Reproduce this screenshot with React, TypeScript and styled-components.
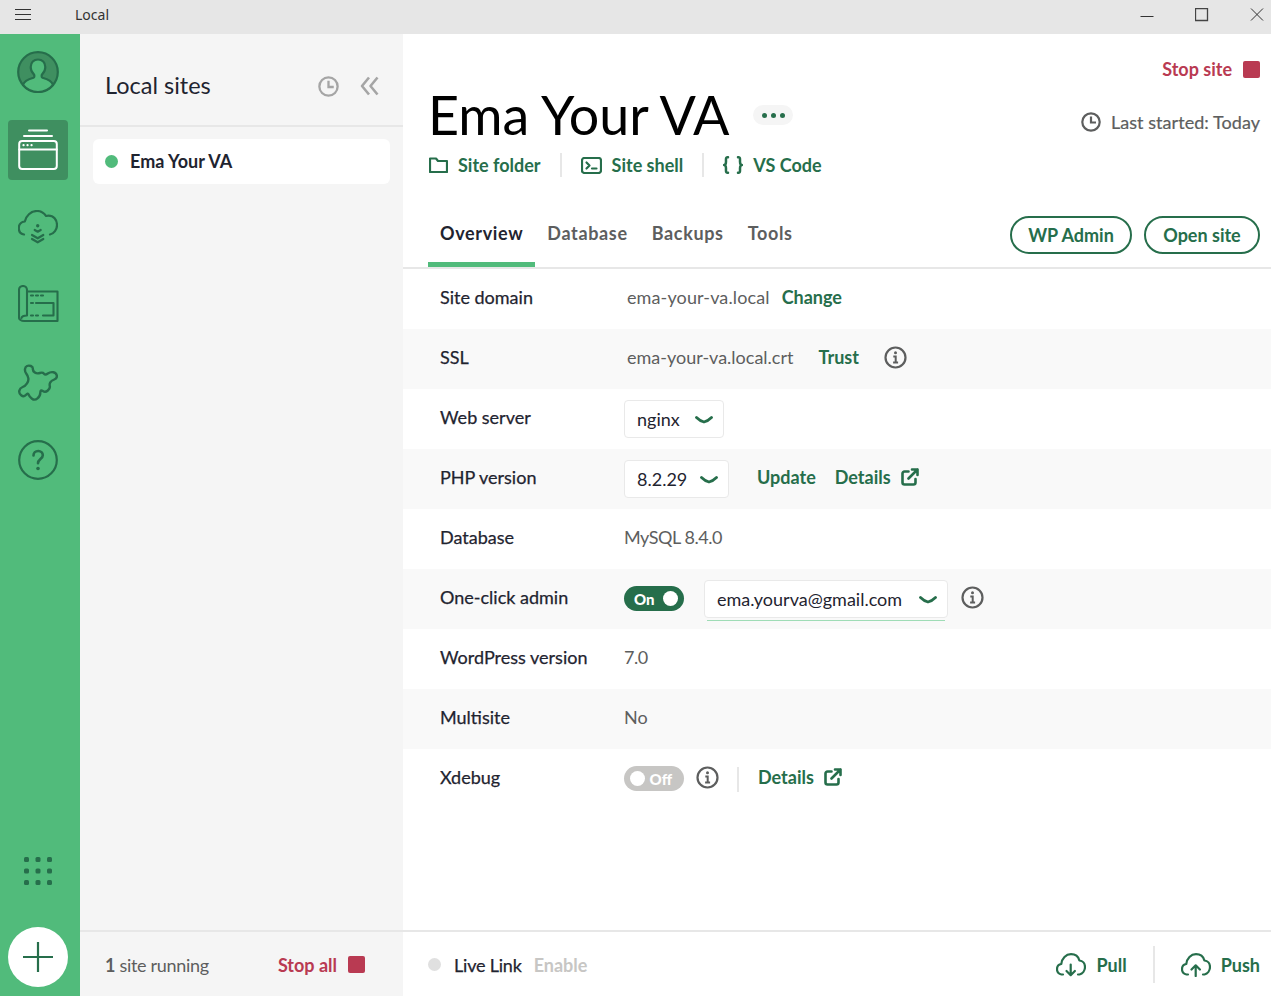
import React from 'react';
import styled, { createGlobalStyle } from 'styled-components';

const GREEN = '#51bb7b';
const DARK = '#266e4b';
const RED = '#b93a52';
const BORDER = '#e7e7e7';
const FONT = '"Lato", "Noto Sans", sans-serif';

const GlobalStyle = createGlobalStyle`
  html, body { margin: 0; height: 100%; overflow: hidden; }
  #root { height: 100%; }
  * { box-sizing: border-box; }
  body { font-family: ${FONT}; color: #262626; background: #fff; }
`;

const Shell = styled.div`
  height: 100vh;
  display: flex;
  flex-direction: column;
`;

const TitleBar = styled.div`
  height: 34px;
  flex: none;
  background: #e6e6e6;
  display: flex;
  align-items: center;
  padding: 0 0 4px 15px;
  color: #333;
`;

const TitleText = styled.span`
  margin: -1px 0 0 44px;
  font: 14px 'Noto Sans', sans-serif;
`;

const WindowButtons = styled.div`
  margin-left: auto;
  display: flex;
  align-items: center;
  gap: 27px;
`;

const WindowButton = styled.div`
  width: 28px;
  height: 28px;
  display: flex;
  align-items: center;
  justify-content: center;
`;

const Body = styled.div`
  flex: 1;
  min-height: 0;
  display: flex;
`;

const Nav = styled.nav`
  width: 80px;
  flex: none;
  background: ${GREEN};
  display: flex;
  flex-direction: column;
  align-items: center;
  padding: 8px 4px 9px 0;
  gap: 17.6px;
`;

const NavItem = styled.div<{ $active?: boolean }>`
  width: 60px;
  height: 60px;
  flex: none;
  border-radius: 4px;
  display: flex;
  align-items: center;
  justify-content: center;
  background: ${(p) => (p.$active ? '#3f8f60' : 'transparent')};
`;

const NavBottom = styled.div`
  margin-top: auto;
  display: flex;
  flex-direction: column;
  align-items: center;
  gap: 42px;
`;

const AddButton = styled.div`
  width: 60px;
  height: 60px;
  border-radius: 50%;
  background: #fff;
  display: flex;
  align-items: center;
  justify-content: center;
`;

const Sidebar = styled.aside`
  width: 323px;
  flex: none;
  background: #f5f5f5;
  display: flex;
  flex-direction: column;
`;

const SidebarHeader = styled.div`
  height: 93px;
  flex: none;
  border-bottom: 2px solid ${BORDER};
  display: flex;
  align-items: center;
  padding: 13px 24px 0 25px;
`;

const SidebarTitle = styled.h2`
  margin: -2px 0 0;
  font-size: 23.5px;
  font-weight: 400;
  color: #1f2430;
  flex: 1;
`;

const SidebarIcons = styled.div`
  display: flex;
  align-items: center;
  gap: 21px;
`;

const SiteList = styled.div`
  flex: 1;
  padding: 12px 13px;
`;

const SiteItem = styled.div`
  height: 45px;
  border-radius: 6px;
  background: #fff;
  display: flex;
  align-items: center;
  padding: 0 0 1px 12px;
  gap: 12px;
  font-size: 18px;
  font-weight: 700;
  color: #1f2430;
`;

const Dot = styled.span<{ $color: string; $size: number }>`
  width: ${(p) => p.$size}px;
  height: ${(p) => p.$size}px;
  border-radius: 50%;
  background: ${(p) => p.$color};
  flex: none;
`;

const FooterBar = styled.div`
  height: 66px;
  flex: none;
  border-top: 2px solid ${BORDER};
  display: flex;
  align-items: center;
`;

const SidebarFooter = styled(FooterBar)`
  padding: 1px 38px 0 25px;
  justify-content: space-between;
  color: #5d5e5e;
  font-size: 18px;
  letter-spacing: -0.3px;
`;

const Strong = styled.strong`
  font-weight: 700;
`;

const StopLink = styled.div`
  display: flex;
  align-items: center;
  gap: 11px;
  color: ${RED};
  font-weight: 700;
  font-size: 18px;
  letter-spacing: 0;
`;

const StopSquare = styled.span`
  width: 17px;
  height: 17px;
  border-radius: 2px;
  background: ${RED};
`;

const Main = styled.main`
  flex: 1;
  min-width: 0;
  display: flex;
  flex-direction: column;
`;

const Header = styled.header`
  height: 163px;
  flex: none;
  display: flex;
  justify-content: space-between;
  padding: 0 11px 0 26px;
`;

const HeaderLeft = styled.div`
  padding-top: 47px;
`;

const HeaderRight = styled.div`
  padding-top: 24px;
  display: flex;
  flex-direction: column;
  align-items: flex-end;
  gap: 31px;
`;

const TitleRow = styled.div`
  display: flex;
  align-items: center;
  gap: 24px;
  height: 68px;
`;

const SiteTitle = styled.h1`
  margin: -2px 0 0 -1px;
  font-size: 53.8px;
  font-weight: 400;
  color: #000;
  line-height: 68px;
`;

const MorePill = styled.div`
  width: 40px;
  height: 20px;
  border-radius: 10px;
  background: #f5f5f5;
  display: flex;
  align-items: center;
  justify-content: center;
  gap: 4px;
`;

const MoreDot = styled.span`
  width: 5px;
  height: 5px;
  border-radius: 50%;
  background: ${DARK};
`;

const LinksRow = styled.div`
  display: flex;
  align-items: center;
  height: 28px;
  margin-top: 2px;
`;

const ToolLink = styled.div`
  display: flex;
  align-items: center;
  gap: 10px;
  color: ${DARK};
  font-size: 18px;
  font-weight: 700;
`;

const VRule = styled.span<{ $gap: number; $h?: number }>`
  width: 2px;
  height: ${(p) => p.$h ?? 24}px;
  background: ${BORDER};
  margin: 0 ${(p) => p.$gap}px;
  flex: none;
`;

const LastStarted = styled.div`
  display: flex;
  align-items: center;
  gap: 10px;
  color: #5d5e5e;
  font-size: 18px;
  letter-spacing: 0.05px;
  -webkit-text-stroke: 0.2px #5d5e5e;
`;

const TabsBar = styled.div`
  height: 72px;
  flex: none;
  border-bottom: 2px solid ${BORDER};
  display: flex;
  justify-content: space-between;
  padding: 0 11px 0 25px;
`;

const Tabs = styled.div`
  display: flex;
  height: 70px;
`;

const Tab = styled.div<{ $active?: boolean }>`
  padding: 25px 12px 0 12px;
  font-size: 18px;
  font-weight: 700;
  letter-spacing: 0.65px;
  color: ${(p) => (p.$active ? '#1f2430' : '#5d5e5e')};
  border-bottom: 5px solid ${(p) => (p.$active ? GREEN : 'transparent')};
`;

const PillButtons = styled.div`
  display: flex;
  gap: 12px;
  padding-top: 19px;
`;

const PillButton = styled.div<{ $w: number }>`
  width: ${(p) => p.$w}px;
  height: 38px;
  padding-bottom: 1px;
  border: 2px solid ${DARK};
  border-radius: 19px;
  color: ${DARK};
  font-size: 18px;
  font-weight: 700;
  display: flex;
  align-items: center;
  justify-content: center;
`;

const Rows = styled.div`
  flex: 1;
`;

const Row = styled.div<{ $shade?: boolean }>`
  height: 60px;
  display: flex;
  align-items: center;
  padding-left: 37px;
  background: ${(p) => (p.$shade ? '#f9f9f9' : '#fff')};
`;

const Label = styled.div`
  width: 184px;
  flex: none;
  padding-bottom: 4px;
  font-size: 18px;
  color: #1f2430;
  -webkit-text-stroke: 0.25px #1f2430;
`;

const Value = styled.span<{ $indent?: number; $track?: number }>`
  margin-left: ${(p) => p.$indent ?? 0}px;
  padding-bottom: 4px;
  color: #5d5e5e;
  font-size: 18px;
  letter-spacing: ${(p) => p.$track ?? 0}px;
`;

const ActionLink = styled.span<{ $left: number }>`
  margin-left: ${(p) => p.$left}px;
  padding-bottom: 4px;
  color: ${DARK};
  font-size: 18px;
  font-weight: 700;
  display: inline-flex;
  align-items: center;
  gap: 10px;
`;

const SelectBox = styled.div<{ $w: number }>`
  position: relative;
  width: ${(p) => p.$w}px;
  height: 38px;
  flex: none;
  background: #fff;
  border: 1px solid #e9e9e9;
  border-radius: 4px;
  padding: 0 10px 0 12px;
  display: flex;
  align-items: center;
  justify-content: space-between;
  font-size: 18px;
  color: #1f2430;
`;

const SelectUnderline = styled.span`
  position: absolute;
  left: 2px;
  right: 2px;
  bottom: -4px;
  height: 1px;
  background: #9fdcb6;
`;

const Toggle = styled.div<{ $on?: boolean }>`
  width: 60px;
  height: 25px;
  margin-bottom: 1px;
  border-radius: 13px;
  flex: none;
  background: ${(p) => (p.$on ? DARK : '#c7c6c4')};
  color: #fff;
  font-size: 15px;
  font-weight: 900;
  display: flex;
  flex-direction: ${(p) => (p.$on ? 'row' : 'row-reverse')};
  justify-content: space-between;
  align-items: center;
  padding: 0 ${(p) => (p.$on ? 6 : 12)}px 0 ${(p) => (p.$on ? 10 : 0)}px;
`;

const ToggleKnob = styled.span<{ $on?: boolean }>`
  width: 15px;
  height: 15px;
  border-radius: 50%;
  background: #fff;
  margin-left: ${(p) => (p.$on ? 0 : 6)}px;
`;

const Slot = styled.span<{ $left: number }>`
  margin-left: ${(p) => p.$left}px;
  display: inline-flex;
`;

const MainFooter = styled(FooterBar)`
  padding: 1px 11px 0 25px;
  font-size: 18px;
`;

const LiveLabel = styled.span`
  margin-left: 13px;
  color: #1f2430;
  letter-spacing: -0.2px;
  -webkit-text-stroke: 0.25px #1f2430;
`;

const EnableLink = styled.span`
  margin-left: 12px;
  font-weight: 700;
  color: #c7c6c4;
`;

const FooterActions = styled.div`
  margin-left: auto;
  display: flex;
  align-items: center;
`;

const ChevronSvg = styled.svg`
  margin-top: 1px;
`;

const Chevron = () => (
  <ChevronSvg width="18" height="8" viewBox="0 0 18 8" fill="none" stroke={DARK} strokeWidth="2.8" strokeLinecap="round" strokeLinejoin="round">
    <path d="M1.5 1.5Q5 5 9 6 13 5 16.5 1.5" />
  </ChevronSvg>
);

const InfoSvg = styled.svg`
  margin-bottom: 4px;
`;

const InfoIcon = () => (
  <InfoSvg width="23" height="23" viewBox="0 0 23 23" fill="none" stroke="#5d5e5e" strokeWidth="2.2">
    <circle cx="11.5" cy="11.5" r="10" />
    <circle cx="11.5" cy="6.8" r="1.5" fill="#5d5e5e" stroke="none" />
    <path d="M9.3 10.5h2.4v6M9.1 16.5h5" strokeWidth="2" />
  </InfoSvg>
);

const ExternalIcon = () => (
  <svg width="18" height="18" viewBox="0 0 18 18" fill="none" stroke={DARK} strokeWidth="2.6" strokeLinecap="round" strokeLinejoin="round">
    <path d="M7.5 3.5H3.5a2 2 0 0 0-2 2v9a2 2 0 0 0 2 2h9a2 2 0 0 0 2-2V11" />
    <path d="M11 1.5h5.5V7M16.5 1.5 7.5 10.5" />
  </svg>
);

const ClockIcon = ({ color, size }: { color: string; size: number }) => (
  <svg width={size} height={size} viewBox="0 0 20 20" fill="none" stroke={color} strokeWidth="2.2">
    <circle cx="10" cy="10" r="8.7" />
    <path d="M10 4.5V10.5H15" />
  </svg>
);

const CloudTransfer = ({ up }: { up?: boolean }) => (
  <svg width="30" height="24" viewBox="0 0 30 24" fill="none" stroke={DARK} strokeWidth="2.2" strokeLinecap="round" strokeLinejoin="round">
    <path d="M7 21.5H5.5C3 21 1 18.8 1 16.2c0-2.7 2-4.8 4.3-5.2C5.8 5.4 10 1.2 15 1.2c4.2 0 7.4 2.6 8.4 6.3 3.2.3 5.6 3 5.6 6.5 0 3.6-2.5 6.7-5.5 7.5H22" />
    {up ? <path d="M14.7 23V12.5M10.5 16.5l4.2-4.2 4.2 4.2" /> : <path d="M14.7 11.5V22M10.5 18l4.2 4.2 4.2-4.2" />}
  </svg>
);

// outline of the addons puzzle, smoothed through the midpoints below
const PUZZLE = [
  [10.7, 1.3], [15, 2.7], [14.7, 7], [19, 10], [24.7, 8], [27.3, 11.3], [32.3, 7.7], [38.3, 8.7], [39.3, 14.3],
  [33.3, 16.7], [31.3, 20], [32.3, 24.3], [27.3, 28.7], [22.3, 25.3], [22.3, 32], [16.7, 36.7], [11.3, 32.7],
  [10, 28.7], [5.7, 33.3], [0.7, 29.3], [2, 24], [7.3, 22], [10.7, 16.7], [10, 12], [6.7, 7.7], [7.3, 2.7],
];

const smoothPath = (pts: number[][]) => {
  const mid = (a: number[], b: number[]) => `${(a[0] + b[0]) / 2} ${(a[1] + b[1]) / 2}`;
  const last = pts[pts.length - 1];
  let d = `M${mid(last, pts[0])}`;
  pts.forEach((p, i) => {
    d += `Q${p[0]} ${p[1]} ${mid(p, pts[(i + 1) % pts.length])}`;
  });
  return `${d}Z`;
};

export default function App() {
  return (
    <Shell>
      <GlobalStyle />
      <TitleBar>
        <svg width="16" height="12" viewBox="0 0 16 12" stroke="#333" strokeWidth="1">
          <path d="M0 .5h16M0 5.500h16M0 10.500h16" />
        </svg>
        <TitleText>Local</TitleText>
        <WindowButtons>
          <WindowButton>
            <svg width="14" height="14" viewBox="0 0 14 14" stroke="#333" strokeWidth="1"><path d="M.5 8.500h13" /></svg>
          </WindowButton>
          <WindowButton>
            <svg width="14" height="14" viewBox="0 0 14 14" fill="none" stroke="#444" strokeWidth="1.300"><path d="M.5 .5h12v12H.5z" /></svg>
          </WindowButton>
          <WindowButton>
            <svg width="14" height="14" viewBox="0 0 14 14" stroke="#333" strokeWidth="1"><path d="M1 .5l12 12M13 .5L1 12.500" /></svg>
          </WindowButton>
        </WindowButtons>
      </TitleBar>
      <Body>
        <Nav>
          <NavItem>
            <svg width="42" height="42" viewBox="0 0 42 42" fill="none">
              <circle cx="21" cy="21" r="19.800" fill="#3f8f60" stroke={DARK} strokeWidth="2.200" />
              <path d="M6 34c1-4 5.500-6 10.500-7.300 1.200-.5 1.200-2.600 0-3.800-1.800-1.800-2.800-4.200-2.800-7C13.700 11.500 16.800 8.500 21 8.500s7.300 3 7.300 7.400c0 2.800-1 5.200-2.800 7-1.200 1.200-1.200 3.300 0 3.800C30.500 28 35 30 36 34A19.500 19.500 0 0 1 6 34Z" fill={GREEN} stroke={DARK} strokeWidth="2.200" strokeLinecap="round" />
            </svg>
          </NavItem>
          <NavItem $active>
            <svg width="40" height="41" viewBox="0 0 40 41" fill="none" stroke="#fff" strokeWidth="2" strokeLinecap="round">
              <path d="M11 1.500h18M6 7h28" />
              <rect x="1.200" y="12" width="37.600" height="28" rx="3" />
              <path d="M1.200 20.500h37.600" />
              <path d="M5.500 16.200h.1M9.500 16.200h.1M13.500 16.200h.1" strokeWidth="2.200" />
            </svg>
          </NavItem>
          <NavItem>
            <svg width="40" height="34" viewBox="0 0 40 34" fill="none" stroke={DARK} strokeWidth="2.200" strokeLinecap="round" strokeLinejoin="round">
              <path d="M6 24.500C2.500 24 .8 21 .8 18c0-3.500 2.500-6 6-6.500C8 6 12.500 1 19 1c4 0 7 2 9 5 1-.3 1.500-.4 2.500-.4 5 0 8.500 4 8.500 9.500 0 4.500-3 8.500-7 9.400" />
              <circle cx="19.700" cy="15.700" r="1.700" fill={DARK} stroke="none" />
              <path d="M16.700 20l3 1.700 3-1.700M14 25l5.700 3.300 5.600-3.300M14 29l5.700 3.300 5.600-3.300" />
            </svg>
          </NavItem>
          <NavItem>
            <svg width="41" height="39" viewBox="0 0 41 39" fill="none" stroke={DARK} strokeWidth="2.100" strokeLinecap="round" strokeLinejoin="round">
              <path d="M9 6.500h30.500V36H6c-2.700 0-5-1.500-5-3.500V5c0-2.400 1.800-4 4-4s4 1.600 4 4v25.500c-3.500 0-5.500 1-5.500 2.500" />
              <path d="M13 10.500h2M18 10.500h2M23 10.500h2M13 18h2M18 18h17.500v12.500H25M13 30.500h2M18 30.500h2" />
            </svg>
          </NavItem>
          <NavItem>
            <svg width="40" height="38" viewBox="0 -1 40 38" fill="none" stroke={DARK} strokeWidth="2.400" strokeLinejoin="round">
              <path d={smoothPath(PUZZLE)} />
            </svg>
          </NavItem>
          <NavItem>
            <svg width="40" height="40" viewBox="0 0 40 40" fill="none" stroke={DARK} strokeWidth="2.200" strokeLinecap="round">
              <circle cx="20" cy="20" r="18.800" />
              <path d="M15.500 15.500c0-2.800 2-4.500 4.700-4.500s4.600 1.700 4.600 4.200c0 3.800-4.800 4-4.800 8" strokeWidth="2.600" />
              <circle cx="20" cy="28.500" r="1.800" fill={DARK} stroke="none" />
            </svg>
          </NavItem>
          <NavBottom>
            <svg width="28" height="28" viewBox="0 0 28 28" fill={DARK}>
              {[2.5, 14, 25.5].flatMap((y) =>
                [2.5, 14, 25.5].map((x) => <rect key={`${x}-${y}`} x={x - 2.5} y={y - 2.5} width="5" height="5" rx="1.500" />),
              )}
            </svg>
            <AddButton>
              <svg width="32" height="32" viewBox="0 0 32 32" stroke={DARK} strokeWidth="2.200">
                <path d="M16 1v30M1 16h30" />
              </svg>
            </AddButton>
          </NavBottom>
        </Nav>
        <Sidebar>
          <SidebarHeader>
            <SidebarTitle>Local sites</SidebarTitle>
            <SidebarIcons>
              <ClockIcon color="#a5a5a5" size={21} />
              <svg width="19" height="20" viewBox="0 0 19 20" fill="none" stroke="#a5a5a5" strokeWidth="2.600" strokeLinejoin="round">
                <path d="M9 1.500 2 10l7 8.500M17.500 1.500 10.500 10l7 8.500" />
              </svg>
            </SidebarIcons>
          </SidebarHeader>
          <SiteList>
            <SiteItem>
              <Dot $color={GREEN} $size={13} />
              Ema Your VA
            </SiteItem>
          </SiteList>
          <SidebarFooter>
            <span><Strong>1</Strong> site running</span>
            <StopLink>Stop all <StopSquare /></StopLink>
          </SidebarFooter>
        </Sidebar>
        <Main>
          <Header>
            <HeaderLeft>
              <TitleRow>
                <SiteTitle>Ema Your VA</SiteTitle>
                <MorePill><MoreDot /><MoreDot /><MoreDot /></MorePill>
              </TitleRow>
              <LinksRow>
                <ToolLink>
                  <svg width="19" height="16" viewBox="0 0 19 16" fill="none" stroke={DARK} strokeWidth="2.200" strokeLinejoin="round">
                    <path d="M1 1.500h6l2 2.500h9v11H1z" />
                  </svg>
                  Site folder
                </ToolLink>
                <VRule $gap={19} />
                <ToolLink>
                  <svg width="21" height="17" viewBox="0 0 21 17" fill="none" stroke={DARK} strokeWidth="2.200" strokeLinecap="round" strokeLinejoin="round">
                    <rect x="1" y="1" width="19" height="15" rx="2.500" />
                    <path d="M5.500 5.500 8.500 8.500 5.500 11.500M11 11.500h4.500" />
                  </svg>
                  Site shell
                </ToolLink>
                <VRule $gap={19} />
                <ToolLink>
                  <svg width="20" height="18" viewBox="0 0 20 18" fill="none" stroke={DARK} strokeWidth="2.500" strokeLinecap="round" strokeLinejoin="round">
                    <path d="M5 1.200C2.500 1.200 3 3 3 5.500 3 7.500 2.500 9 1 9c1.500 0 2 1.500 2 3.500 0 2.500-.5 4.300 2 4.300M15 1.200c2.500 0 2 1.800 2 4.300 0 2 .5 3.500 2 3.500-1.500 0-2 1.500-2 3.500 0 2.500.5 4.300-2 4.300" />
                  </svg>
                  VS Code
                </ToolLink>
              </LinksRow>
            </HeaderLeft>
            <HeaderRight>
              <StopLink>Stop site <StopSquare /></StopLink>
              <LastStarted>
                <ClockIcon color="#5d5e5e" size={20} />
                Last started: Today
              </LastStarted>
            </HeaderRight>
          </Header>
          <TabsBar>
            <Tabs>
              <Tab $active>Overview</Tab>
              <Tab>Database</Tab>
              <Tab>Backups</Tab>
              <Tab>Tools</Tab>
            </Tabs>
            <PillButtons>
              <PillButton $w={122}>WP Admin</PillButton>
              <PillButton $w={116}>Open site</PillButton>
            </PillButtons>
          </TabsBar>
          <Rows>
            <Row>
              <Label>Site domain</Label>
              <Value $indent={3} $track={0.12}>ema-your-va.local</Value>
              <ActionLink $left={12}>Change</ActionLink>
            </Row>
            <Row $shade>
              <Label>SSL</Label>
              <Value $indent={3}>ema-your-va.local.crt</Value>
              <ActionLink $left={25}>Trust</ActionLink>
              <Slot $left={25}><InfoIcon /></Slot>
            </Row>
            <Row>
              <Label>Web server</Label>
              <SelectBox $w={100}>nginx <Chevron /></SelectBox>
            </Row>
            <Row $shade>
              <Label>PHP version</Label>
              <SelectBox $w={105}>8.2.29 <Chevron /></SelectBox>
              <ActionLink $left={28}>Update</ActionLink>
              <ActionLink $left={19}>Details <ExternalIcon /></ActionLink>
            </Row>
            <Row>
              <Label>Database</Label>
              <Value $track={-0.45}>MySQL 8.4.0</Value>
            </Row>
            <Row $shade>
              <Label>One-click admin</Label>
              <Toggle $on>On <ToggleKnob $on /></Toggle>
              <Slot $left={20}>
                <SelectBox $w={244}>ema.yourva@gmail.com <Chevron /><SelectUnderline /></SelectBox>
              </Slot>
              <Slot $left={13}><InfoIcon /></Slot>
            </Row>
            <Row>
              <Label>WordPress version</Label>
              <Value $track={-0.5}>7.0</Value>
            </Row>
            <Row $shade>
              <Label>Multisite</Label>
              <Value>No</Value>
            </Row>
            <Row>
              <Label>Xdebug</Label>
              <Toggle>Off <ToggleKnob /></Toggle>
              <Slot $left={12}><InfoIcon /></Slot>
              <VRule $gap={18} $h={25} />
              <ActionLink $left={1}>Details <ExternalIcon /></ActionLink>
            </Row>
          </Rows>
          <MainFooter>
            <Dot $color="#e0e0e0" $size={13} />
            <LiveLabel>Live Link</LiveLabel>
            <EnableLink>Enable</EnableLink>
            <FooterActions>
              <ToolLink><CloudTransfer /> Pull</ToolLink>
              <VRule $gap={26} $h={37} />
              <ToolLink><CloudTransfer up /> Push</ToolLink>
            </FooterActions>
          </MainFooter>
        </Main>
      </Body>
    </Shell>
  );
}
